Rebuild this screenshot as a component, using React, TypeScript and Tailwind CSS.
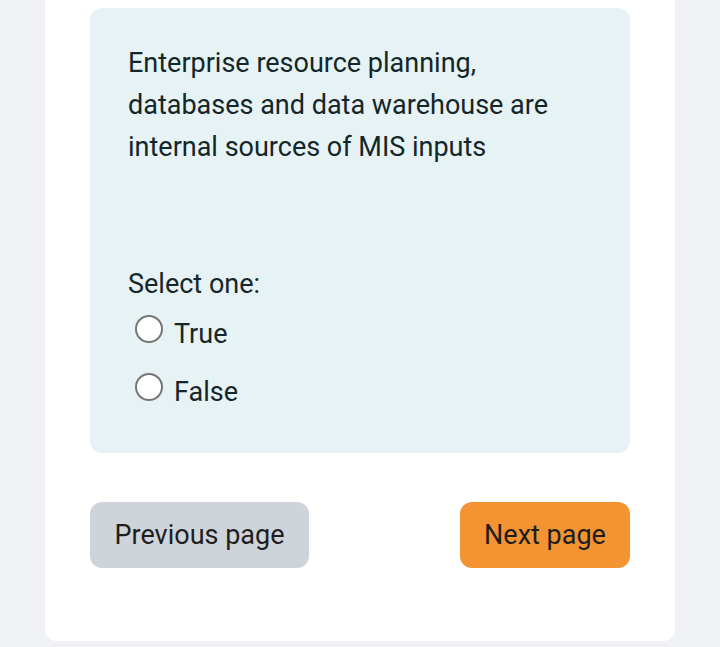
import React from "react";

function Radio({ label }: { label: string }) {
  return (
    <label className="flex h-[58px] items-center">
      <span className="ml-[7px] mb-[10px] box-border block h-[28px] w-[28px] shrink-0 rounded-full border-2 border-[#767676] bg-white" />
      <span className="ml-[11px] text-[27px] leading-[27px] text-[#17262a]">{label}</span>
    </label>
  );
}

export default function App() {
  return (
    <div
      className="min-h-[647px] w-full bg-[#eff1f5]"
      style={{ fontFamily: "Roboto, 'Noto Sans', sans-serif" }}
    >
      <div className="mx-[45px] rounded-b-xl bg-white px-[45px] pt-[8px] pb-[73px]">
        <div className="rounded-xl bg-[#e6f2f4] pl-[38px] pr-[38px] pt-[34px] pb-[32px]">
          <div className="text-[27px] leading-[42px] text-[#132629]">
            Enterprise resource planning, databases and data warehouse are internal sources of MIS inputs
          </div>
          <div className="mt-[95px] text-[27px] leading-[42px] text-[#17262a]">Select one:</div>
          <Radio label="True" />
          <Radio label="False" />
        </div>
        <div className="mt-[49px] flex items-center justify-between">
          <button className="h-[66px] w-[219px] rounded-xl bg-[#cfd4da] text-[27px] text-[#1e1e1e]">
            Previous page
          </button>
          <button className="h-[66px] w-[170px] rounded-xl bg-[#f39332] text-[27px] text-[#1e1e1e]">
            Next page
          </button>
        </div>
      </div>
    </div>
  );
}
